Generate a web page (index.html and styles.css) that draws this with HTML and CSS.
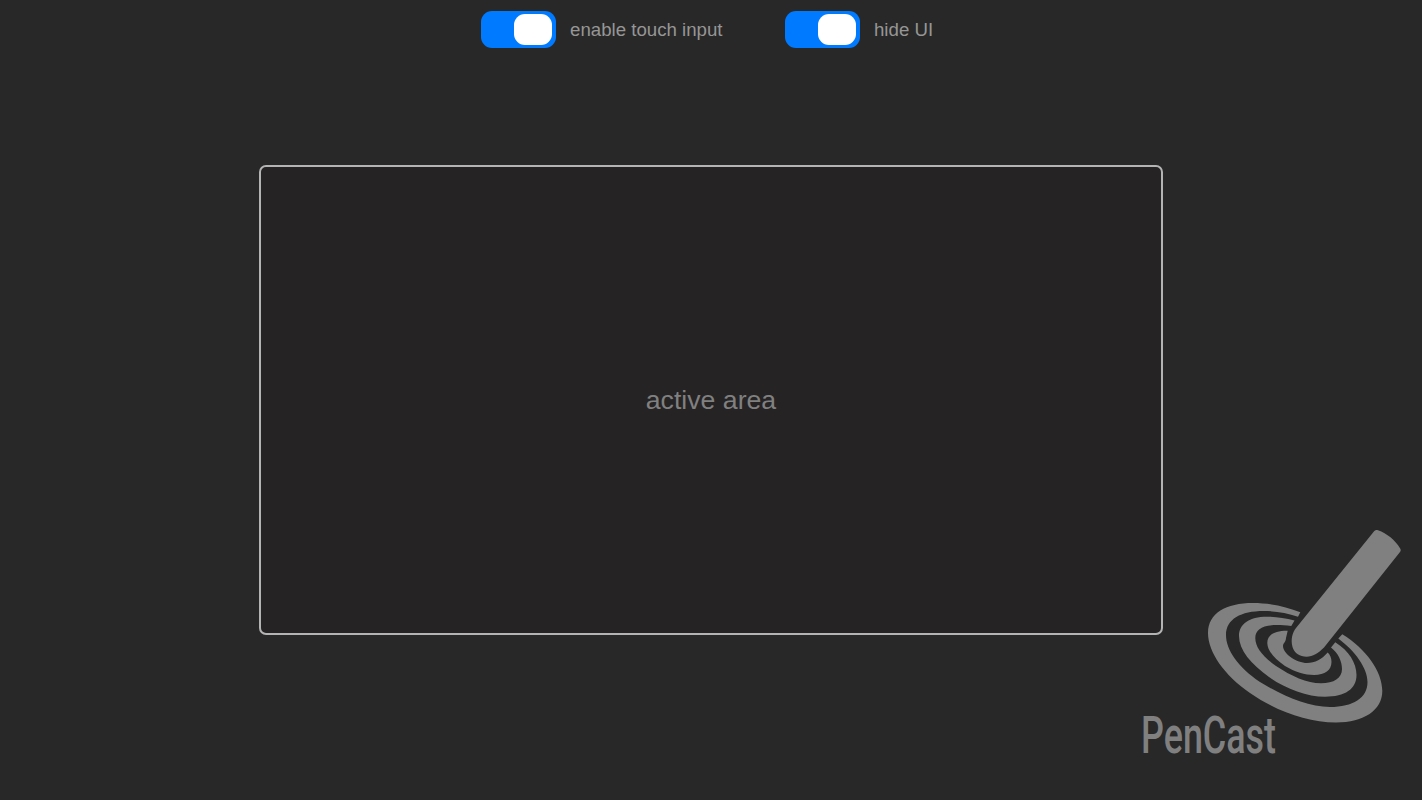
FILE: index.html
```html
<!DOCTYPE html>
<html lang="en">
<head>
  <meta charset="utf-8">
  <title>PenCast</title>
  <link rel="stylesheet" href="styles.css">
</head>
<body>
  <div class="controls">
    <label class="toggle">
      <input type="checkbox" id="touch" checked>
      <span class="slider"></span>
      <span class="label-text">enable touch input</span>
    </label>
    <label class="toggle">
      <input type="checkbox" id="hide-ui" checked>
      <span class="slider"></span>
      <span class="label-text">hide UI</span>
    </label>
  </div>

  <main>
    <div class="active-area" id="active-area">active area</div>
  </main>

  <svg class="logo" viewBox="0 0 282 260" role="img" aria-label="PenCast">
    <g transform="translate(60 0)">
      <!-- ripples -->
      <path d="M100.3 92.3C86 86.500 69 83 53 83C26 83 8 93 8 113C8 132 24 155 50 173C76 191 107 202.500 136 202.500C164 202.500 182.300 190 182.300 171C182.300 151 166 129 142.300 114.200L138.300 118.500C155 131 167.500 148 167.500 162C167.500 178 153 187 130 187C108 187 83 176 60 162C38 147 26 130 26 115C26 99 41 91 63.500 91C75 91 87 93 98 96.700Z"/>
      <path d="M94.500 100.500C85 98 76 96.700 67 96.700C49 96.700 39 104 39 116C39 130 51 144 69 157C86 169 107 176.700 125 176.700C145 176.700 156.500 169 156.500 155C156.500 143 149 131 135.300 122.300L131 127.500C138 133 142 141 142 149C142 158 134 163.300 121 163.300C107 163.300 91 156 76 146C62 136 55.300 127 55.300 118C55.300 107 67 103 91.300 106Z"/>
      <path d="M87.700 110.700C76 110.500 67.300 114 67.300 123C67.300 131 75 139 85 146C95 152 105 155 114 155C125 155 131.500 150 131.500 142C131.500 138 130 134.500 127.700 132.500C122 139 115 143 107 143C97 143 83 134 83 126C83 123 86 122 86 118Z"/>
      <!-- pen -->
      <path d="M174.300 11C175.500 10 176.500 9.900 178 10.300C187 13.500 195 20 200.200 28.500C201 30 200.800 31 200 32L124 127.500C118 133.500 113 136.700 106.500 136.700C100 136.700 94.500 133.500 92.500 127C90.500 119 92.500 112.500 96 108Z"/>
    </g>
    <text x="1" y="232.500" textLength="135" lengthAdjust="spacingAndGlyphs">PenCast</text>
  </svg>
</body>
</html>
```

FILE: styles.css
```css
body {
  margin: 0;
  height: 100vh;
  position: relative;
  overflow: hidden;
  background-color: #282828;
  color: #808080;
  font-family: "Liberation Sans", Arial, sans-serif;
}

.controls {
  display: flex;
  gap: 62.5px;
  padding: 11px 0 0 481px;
}

.toggle {
  display: flex;
  align-items: center;
  height: 37px;
  cursor: pointer;
}

.toggle input {
  display: none;
}

.slider {
  box-sizing: border-box;
  width: 75px;
  height: 37px;
  padding: 3px;
  border-radius: 11px;
  background-color: #555;
}

.slider::before {
  content: "";
  display: block;
  width: 38px;
  height: 31px;
  border-radius: 11px;
  background-color: white;
}

.toggle input:checked + .slider {
  background-color: #007aff;
}

.toggle input:checked + .slider::before {
  margin-left: 30px;
}

.label-text {
  margin-left: 14px;
  font-size: 18.67px;
  color: #969696;
}

main {
  display: flex;
  justify-content: center;
  padding-top: 117px;
}

.active-area {
  box-sizing: border-box;
  width: 904px;
  height: 470px;
  display: flex;
  align-items: center;
  justify-content: center;
  border: 2px solid #b4b4b4;
  border-radius: 7px;
  background-color: #252324;
  font-size: 26.67px;
}

/* logo sits over the bottom right corner */
.logo {
  position: absolute;
  right: 0;
  bottom: 20px;
  width: 282px;
  height: 260px;
  overflow: visible;
  fill: #808080;
}

.logo text {
  font-family: Roboto, sans-serif;
  font-size: 52.5px;
  font-weight: 500;
}
```
